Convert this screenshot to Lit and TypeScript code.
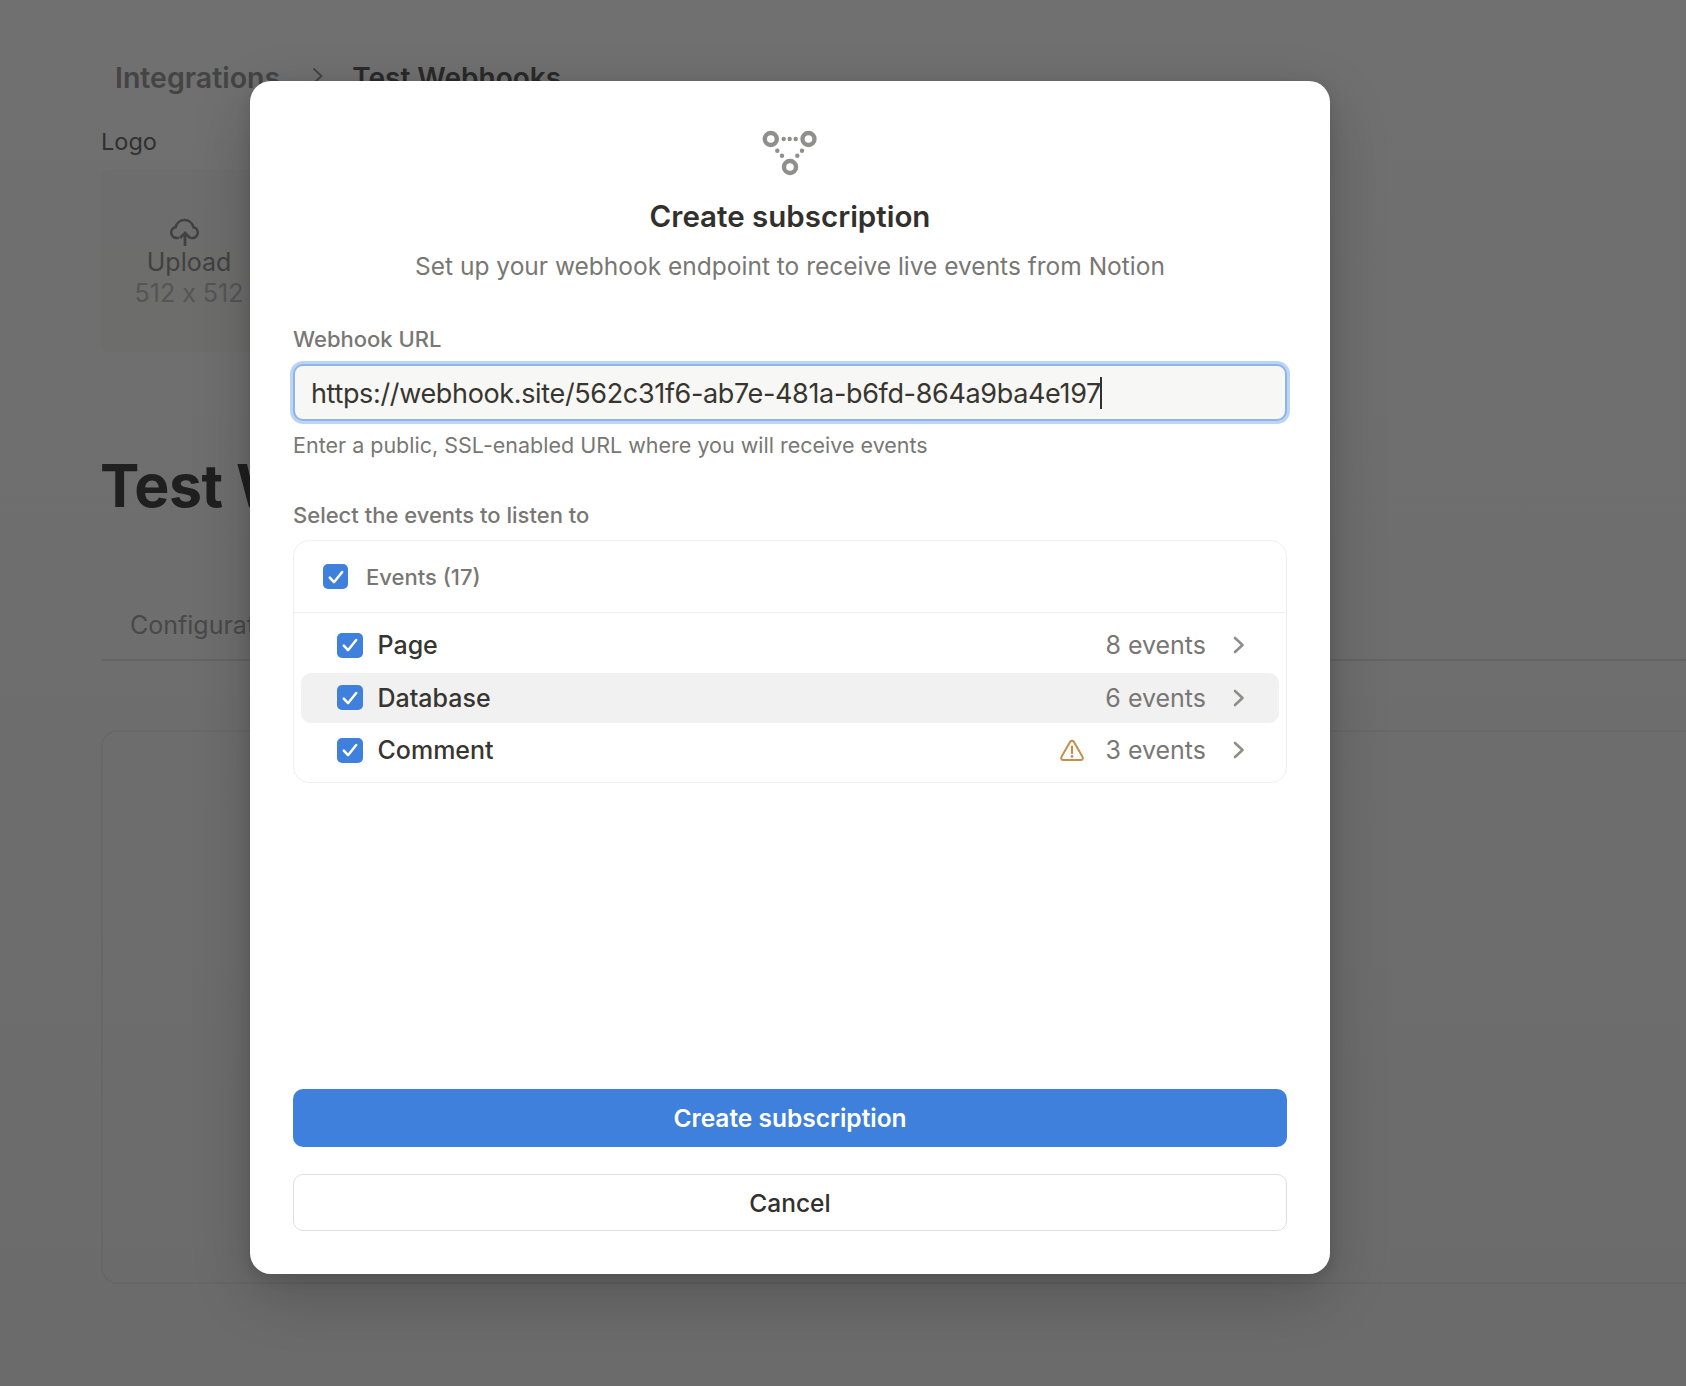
import { LitElement, html, css, svg } from "lit";
import { customElement } from "lit/decorators.js";

const check = html`<svg viewBox="0 0 26 26" width="26" height="26">
  <path d="M6.8 13.6l4.2 4.6L19.2 8" fill="none" stroke="#fff" stroke-width="2.5" stroke-linecap="round" stroke-linejoin="round"></path>
</svg>`;

const chevron = html`<svg class="chevron" viewBox="0 0 14 18" width="14" height="18">
  <path d="M3 2l7.5 7L3 16" fill="none" stroke="#8f8e8b" stroke-width="2.6" stroke-linecap="round" stroke-linejoin="round"></path>
</svg>`;

const warning = html`<svg viewBox="0 0 26 24" width="26" height="24">
  <path d="M11.3 3.6a2 2 0 0 1 3.4 0L23.6 19a2 2 0 0 1-1.7 3H4.1a2 2 0 0 1-1.7-3z" fill="none" stroke="#c2904a" stroke-width="2" stroke-linejoin="round"></path>
  <path d="M13 8.6v6.6" stroke="#c2904a" stroke-width="2.2" stroke-linecap="round"></path>
  <circle cx="13" cy="18.4" r="1.3" fill="#c2904a"></circle>
</svg>`;

const webhookRings = [[10.8, 15], [48.5, 15], [30, 43]];
const webhookDots = [
  [23.7, 15], [29.7, 15], [35.7, 15],
  [17.3, 26.7], [22, 31.7], [37.3, 31.7], [42, 26.7],
];

const webhookIcon = html`<svg viewBox="0 0 60 54" width="60" height="54">
  ${webhookRings.map(
    ([x, y]) => svg`<circle cx=${x} cy=${y} r="6" fill="none" stroke="#8f8f8d" stroke-width="4.4"></circle>`
  )}
  ${webhookDots.map(([x, y]) => svg`<circle cx=${x} cy=${y} r="2.2" fill="#8f8f8d"></circle>`)}
</svg>`;

@customElement("app-root")
export class AppRoot extends LitElement {
  static styles = css`
    :host {
      display: block;
      position: relative;
      height: 1386px;
      overflow: hidden;
      font-family: Inter, "Liberation Sans", sans-serif;
      color: #37352f;
      background: #fff;
    }
    button {
      font: inherit;
    }

    /* page under the dialog */
    .page {
      height: 100%;
      box-sizing: border-box;
      padding: 58px 0 0 101px;
      display: flex;
      flex-direction: column;
    }
    .crumbs {
      display: flex;
      align-items: center;
      gap: 29px;
      padding-left: 14px;
      font-size: 28.5px;
      font-weight: 600;
      line-height: 40px;
      color: #606060;
    }
    .crumbs .parent {
      color: #9c9c9c;
    }
    .crumbs .current {
      font-size: 28px;
    }
    .crumbs svg {
      margin: -4px -2px 0 2px;
    }
    .logo-label {
      margin-top: 26px;
      font-size: 23.5px;
      line-height: 36px;
      color: #6e6e6e;
    }
    .upload {
      margin-top: 10px;
      width: 176px;
      height: 182px;
      box-sizing: border-box;
      border-radius: 8px;
      background: #fafaf9;
      display: flex;
      flex-direction: column;
      align-items: center;
      padding-top: 47px;
      font-size: 25px;
      line-height: 31px;
      color: #959595;
      white-space: nowrap;
    }
    .upload svg {
      margin-right: 8px;
    }
    .upload .hint {
      color: #c4c4c4;
      font-feature-settings: "calt" 0;
    }
    .title {
      margin: 94px 0 0 -1px;
      font-size: 59px;
      line-height: 80px;
      font-weight: 700;
      letter-spacing: -0.5px;
      color: #484848;
      white-space: nowrap;
    }
    .tabs {
      margin-top: 81px;
      padding: 0 0 16px 29px;
      border-bottom: 2px solid #e9e9e7;
      font-size: 25px;
      line-height: 36px;
      color: #a8a8a8;
    }
    .panel {
      margin-top: 69px;
      height: 550px;
      border: 2px solid #f3f3f1;
      border-right: none;
      border-radius: 16px 0 0 16px;
    }
    .backdrop {
      position: absolute;
      inset: 0;
      background: linear-gradient(180deg, rgba(0, 0, 0, 0.56) 0%, rgba(0, 0, 0, 0.58) 100%);
    }

    /* dialog */
    .dialog {
      position: absolute;
      left: 250px;
      top: 81px;
      width: 1080px;
      height: 1193px;
      box-sizing: border-box;
      padding: 43px;
      background: #fff;
      border-radius: 21px;
      box-shadow: 0 20px 60px rgba(0, 0, 0, 0.2), 0 4px 14px rgba(0, 0, 0, 0.12);
      display: flex;
      flex-direction: column;
    }
    .head {
      display: flex;
      flex-direction: column;
      align-items: center;
    }
    .head h2 {
      margin: 17px 0 0;
      font-size: 29.5px;
      line-height: 42px;
      font-weight: 600;
      color: #32302c;
    }
    .head p {
      margin: 10px 0 0;
      font-size: 24.5px;
      line-height: 38px;
      color: #787774;
    }
    .label {
      font-size: 22px;
      line-height: 30px;
      font-weight: 500;
      color: #787774;
    }
    .url-label {
      margin-top: 39px;
    }
    .input {
      margin-top: 10px;
      height: 57px;
      box-sizing: border-box;
      border: 2px solid #8fb4ea;
      border-radius: 10px;
      box-shadow: 0 0 0 3px #bcd5f5;
      background: #f7f7f5;
      padding: 1px 16px 0;
      display: flex;
      align-items: center;
      font-size: 27px;
      letter-spacing: -0.35px;
      color: #37352f;
    }
    .caret {
      width: 2px;
      height: 32px;
      margin-left: -1px;
      background: #32302c;
    }
    .help {
      margin-top: 8px;
      font-size: 21.5px;
      line-height: 32px;
      color: #787774;
    }
    .events-label {
      margin-top: 39px;
    }
    .events {
      margin-top: 10px;
      border: 1.5px solid #efefed;
      border-radius: 16px;
      padding-bottom: 6px;
    }
    .all {
      height: 72px;
      box-sizing: border-box;
      display: flex;
      align-items: center;
      gap: 18px;
      padding-left: 29px;
      border-bottom: 1.5px solid #efefed;
      font-size: 22px;
      font-weight: 500;
      color: #787774;
    }
    .list {
      padding: 6px 7px 0;
    }
    .row {
      height: 52px;
      display: flex;
      align-items: center;
      border-radius: 10px;
      padding: 0 33px 0 35.5px;
      font-size: 25px;
      font-weight: 500;
      color: #37352f;
    }
    .row.hover {
      height: 50px;
      margin: 2px 0 1px;
      padding-bottom: 1px;
      box-sizing: border-box;
      background: #f1f1f1;
    }
    .box {
      width: 25px;
      height: 25px;
      border-radius: 5px;
      background: #3f80dc;
      display: flex;
      align-items: center;
      justify-content: center;
      flex: none;
    }
    .box svg {
      flex: none;
    }
    .row .box {
      width: 26px;
      margin-right: 15px;
    }
    .name {
      flex: 1;
    }
    .warn {
      display: flex;
      margin-right: 20px;
    }
    .count {
      font-size: 25px;
      font-weight: 400;
      color: #787774;
    }
    .chevron {
      margin-left: 26px;
    }
    .actions {
      margin-top: auto;
      display: flex;
      flex-direction: column;
      gap: 27px;
    }
    .btn {
      height: 58px;
      border-radius: 10px;
      font-size: 24.5px;
      font-weight: 600;
      cursor: pointer;
    }
    .btn.primary {
      background: #3f80dc;
      color: #fff;
      border: none;
    }
    .btn.secondary {
      height: 57px;
      background: #fff;
      color: #32302c;
      border: 1.5px solid #dfdfde;
      font-weight: 500;
    }
  `;

  private renderRow(name: string, count: number, hover = false, warn = false) {
    return html`<div class="row ${hover ? "hover" : ""}">
      <span class="box">${check}</span>
      <span class="name">${name}</span>
      ${warn ? html`<span class="warn">${warning}</span>` : null}
      <span class="count">${count} events</span>
      ${chevron}
    </div>`;
  }

  render() {
    return html`
      <div class="page">
        <div class="crumbs">
          <span class="parent">Integrations</span>
          <svg viewBox="0 0 14 18" width="14" height="18">
            <path d="M3 2l7.5 7L3 16" fill="none" stroke="#9c9c9c" stroke-width="2" stroke-linecap="round" stroke-linejoin="round"></path>
          </svg>
          <span class="current">Test Webhooks</span>
        </div>
        <div class="logo-label">Logo</div>
        <div class="upload">
          <svg viewBox="0 0 32 30" width="32" height="30">
            <path d="M9 21H7.5a5.5 5.5 0 0 1-.8-10.9 9 9 0 0 1 17.6 0 5.5 5.5 0 0 1-.8 10.9H22" fill="none" stroke="#959595" stroke-width="2.6" stroke-linecap="round"></path>
            <path d="M16 29V17M11 21l5-5 5 5" fill="none" stroke="#959595" stroke-width="2.8"></path>
          </svg>
          <span>Upload</span>
          <span class="hint">512 x 512</span>
        </div>
        <h1 class="title">Test Webhooks</h1>
        <div class="tabs">Configuration</div>
        <div class="panel"></div>
      </div>
      <div class="backdrop"></div>
      <div class="dialog">
        <div class="head">
          ${webhookIcon}
          <h2>Create subscription</h2>
          <p>Set up your webhook endpoint to receive live events from Notion</p>
        </div>
        <div class="label url-label">Webhook URL</div>
        <div class="input">
          <span>https://webhook.site/562c31f6-ab7e-481a-b6fd-864a9ba4e197</span><span class="caret"></span>
        </div>
        <div class="help">Enter a public, SSL-enabled URL where you will receive events</div>
        <div class="label events-label">Select the events to listen to</div>
        <div class="events">
          <div class="all"><span class="box">${check}</span><span>Events (17)</span></div>
          <div class="list">
            ${this.renderRow("Page", 8)}
            ${this.renderRow("Database", 6, true)}
            ${this.renderRow("Comment", 3, false, true)}
          </div>
        </div>
        <div class="actions">
          <button class="btn primary">Create subscription</button>
          <button class="btn secondary">Cancel</button>
        </div>
      </div>
    `;
  }
}
